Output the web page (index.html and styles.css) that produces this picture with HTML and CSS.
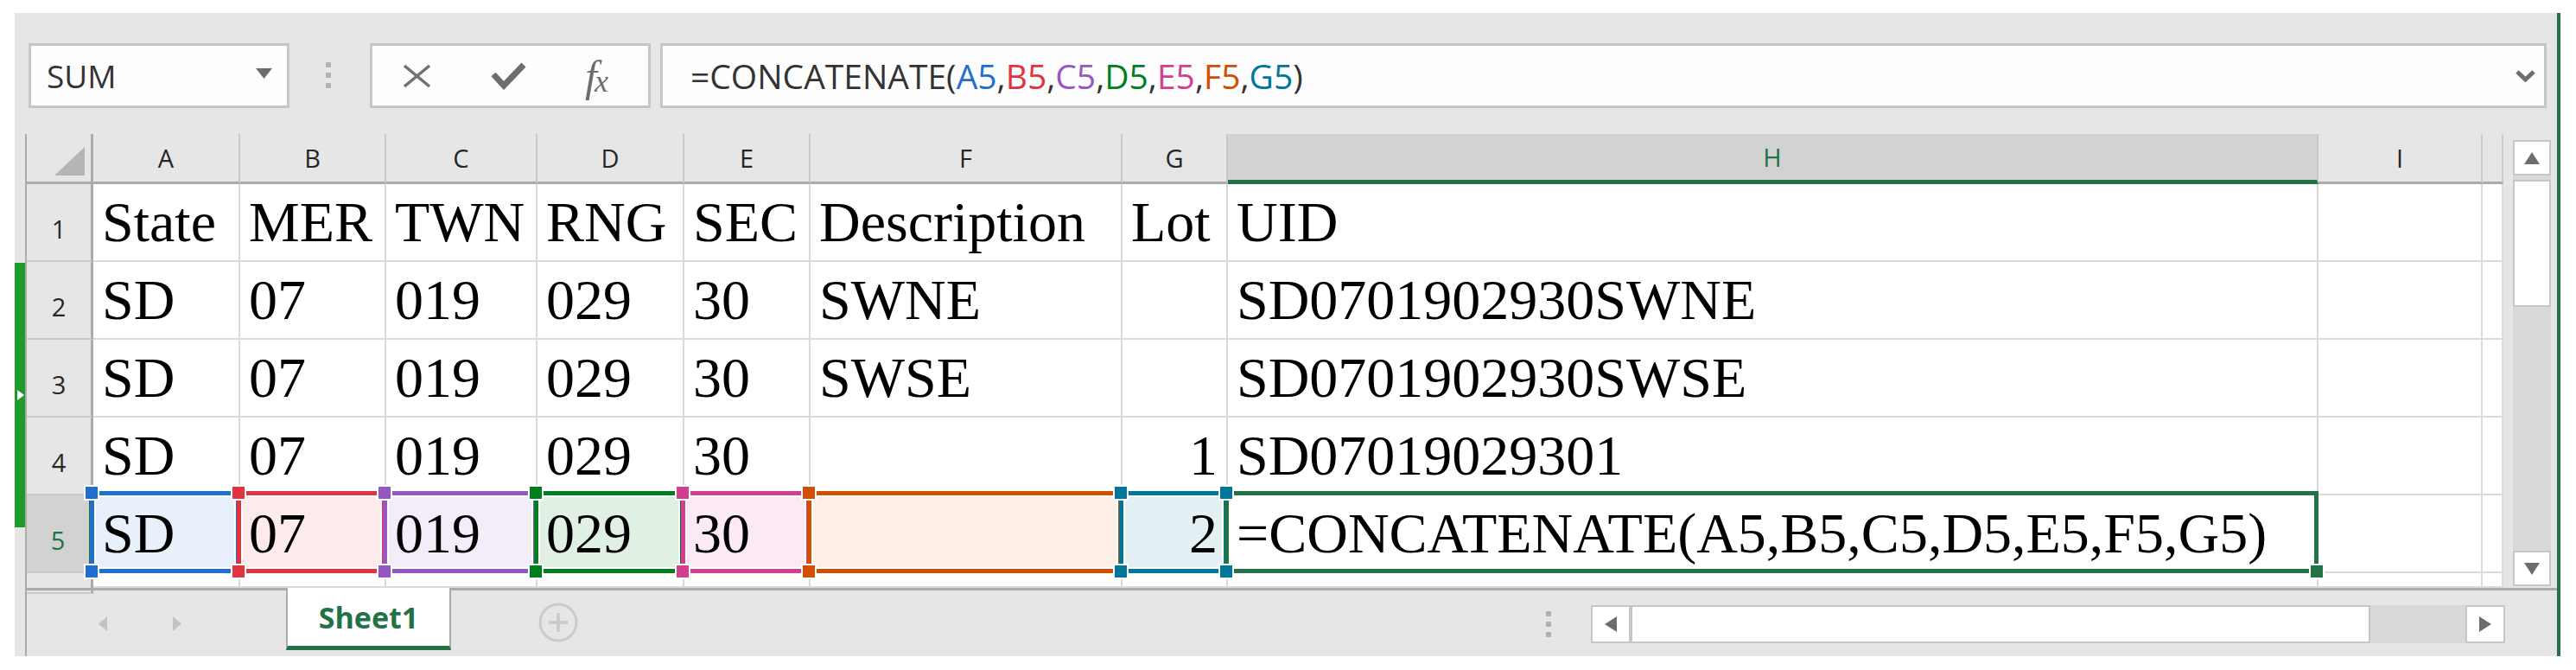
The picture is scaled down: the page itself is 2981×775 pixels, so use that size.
FILE: index.html
```html
<!DOCTYPE html>
<html>

<head>
  <meta charset="utf-8">
  <link rel="stylesheet" href="styles.css">
</head>

<body>
  <div class="window">
    <div class="formula-bar">
      <div class="name-box">
        <span>SUM</span>
        <svg width="19" height="12" viewBox="0 0 19 12"><path d="M0 0H19L9.5 12Z" fill="#6d6d6d"/></svg>
      </div>
      <svg class="grip" width="6" height="30" viewBox="0 0 6 30" fill="#b3b3b3"><rect y="0" width="6" height="6"/><rect y="12" width="6" height="6"/><rect y="24" width="6" height="6"/></svg>
      <div class="fx-buttons">
        <svg width="35" height="28" viewBox="0 0 35 28"><path d="M3 2L32 26M32 2L3 26" stroke="#707070" stroke-width="3.5" fill="none"/></svg>
        <svg width="41" height="33" viewBox="0 0 41 33"><path d="M3 15L15 28L38 4" stroke="#6d6d6d" stroke-width="7" fill="none"/></svg>
        <span class="fx"><i>f</i><i>x</i></span>
      </div>
      <div class="formula-input">
        <span class="formula">=CONCATENATE(<b class="ca">A5</b>,<b class="cb">B5</b>,<b class="cc">C5</b>,<b class="cd">D5</b>,<b class="ce">E5</b>,<b class="cf">F5</b>,<b class="cg">G5</b>)</span>
        <svg width="23" height="14" viewBox="0 0 23 14"><path d="M2 2L11.5 11L21 2" stroke="#6d6d6d" stroke-width="5" fill="none"/></svg>
      </div>
    </div>

    <div class="sheet">
      <div class="gutter">
        <div class="side-tab">
          <svg width="8" height="12" viewBox="0 0 8 12"><path d="M0 0L8 6L0 12Z" fill="#fff"/></svg>
        </div>
      </div>
      <div class="grid">
        <div class="h corner"><svg width="35" height="33" viewBox="0 0 35 33"><path d="M35 0V33H0Z" fill="#b5b5b5"/></svg></div>
        <div class="h">A</div>
        <div class="h">B</div>
        <div class="h">C</div>
        <div class="h">D</div>
        <div class="h">E</div>
        <div class="h">F</div>
        <div class="h">G</div>
        <div class="h sel">H</div>
        <div class="h">I</div>
        <div class="h"></div>

        <div class="rh">1</div>
        <div class="c">State</div>
        <div class="c">MER</div>
        <div class="c">TWN</div>
        <div class="c">RNG</div>
        <div class="c">SEC</div>
        <div class="c">Description</div>
        <div class="c">Lot</div>
        <div class="c">UID</div>
        <div class="c"></div>
        <div class="c"></div>

        <div class="rh">2</div>
        <div class="c">SD</div>
        <div class="c">07</div>
        <div class="c">019</div>
        <div class="c">029</div>
        <div class="c">30</div>
        <div class="c">SWNE</div>
        <div class="c"></div>
        <div class="c">SD0701902930SWNE</div>
        <div class="c"></div>
        <div class="c"></div>

        <div class="rh">3</div>
        <div class="c">SD</div>
        <div class="c">07</div>
        <div class="c">019</div>
        <div class="c">029</div>
        <div class="c">30</div>
        <div class="c">SWSE</div>
        <div class="c"></div>
        <div class="c">SD0701902930SWSE</div>
        <div class="c"></div>
        <div class="c"></div>

        <div class="rh">4</div>
        <div class="c">SD</div>
        <div class="c">07</div>
        <div class="c">019</div>
        <div class="c">029</div>
        <div class="c">30</div>
        <div class="c"></div>
        <div class="c num">1</div>
        <div class="c">SD07019029301</div>
        <div class="c"></div>
        <div class="c"></div>

        <div class="rh sel">5</div>
        <div class="c rng ra">SD</div>
        <div class="c rng rb">07</div>
        <div class="c rng rc">019</div>
        <div class="c rng rd">029</div>
        <div class="c rng re">30</div>
        <div class="c rng rf"></div>
        <div class="c rng rg num">2</div>
        <div class="c act">=CONCATENATE(A5,B5,C5,D5,E5,F5,G5)</div>
        <div class="c"></div>
        <div class="c"></div>

        <div class="rh"></div>
        <div class="c"></div>
        <div class="c"></div>
        <div class="c"></div>
        <div class="c"></div>
        <div class="c"></div>
        <div class="c"></div>
        <div class="c"></div>
        <div class="c"></div>
        <div class="c"></div>
        <div class="c"></div>
      </div>
      <div class="vscroll">
        <div class="sb-btn"><svg width="18" height="14" viewBox="0 0 18 14"><path d="M9 0L18 14H0Z" fill="#6d6d6d"/></svg></div>
        <div class="sb-thumb"></div>
        <div class="sb-track"></div>
        <div class="sb-btn"><svg width="18" height="14" viewBox="0 0 18 14"><path d="M0 0H18L9 14Z" fill="#6d6d6d"/></svg></div>
      </div>
    </div>

    <div class="tabbar">
      <svg class="nav" width="10" height="17" viewBox="0 0 10 17"><path d="M10 0V17L0 8.5Z" fill="#c3c3c3"/></svg>
      <svg class="nav next" width="10" height="17" viewBox="0 0 10 17"><path d="M0 0V17L10 8.5Z" fill="#c3c3c3"/></svg>
      <div class="tab">Sheet1</div>
      <svg class="add" width="46" height="46" viewBox="0 0 46 46"><circle cx="23" cy="23" r="21" stroke="#cbcbcb" stroke-width="3" fill="none"/><path d="M23 12V34M12 23H34" stroke="#cbcbcb" stroke-width="4"/></svg>
      <svg class="grip2" width="6" height="30" viewBox="0 0 6 30" fill="#b3b3b3"><rect y="0" width="6" height="6"/><rect y="12" width="6" height="6"/><rect y="24" width="6" height="6"/></svg>
      <div class="hscroll">
        <div class="sb-btn"><svg width="14" height="18" viewBox="0 0 14 18"><path d="M14 0V18L0 9Z" fill="#6d6d6d"/></svg></div>
        <div class="sb-thumb"></div>
        <div class="sb-track"></div>
        <div class="sb-btn"><svg width="14" height="18" viewBox="0 0 14 18"><path d="M0 0V18L14 9Z" fill="#6d6d6d"/></svg></div>
      </div>
    </div>
  </div>
</body>

</html>
```

FILE: styles.css
```css
html,
body {
  margin: 0;
  padding: 0;
  background: #fff;
}

body {
  font-family: "Open Sans", "Noto Sans", sans-serif;
  color: #262626;
}

.window {
  margin: 15px 0 0 17px;
  width: 2942px;
  height: 744px;
  background: #e6e6e6;
  border-right: 4px solid #217346;
  display: flex;
  flex-direction: column;
}

/* formula bar */

.formula-bar {
  box-sizing: border-box;
  height: 140px;
  padding-top: 35px;
  display: flex;
  align-items: flex-start;
}

.name-box,
.fx-buttons,
.formula-input {
  box-sizing: border-box;
  height: 75px;
  border: 3px solid #c6c6c6;
  background: #fdfdfd;
  display: flex;
  align-items: center;
}

.name-box {
  margin-left: 16px;
  width: 302px;
  padding: 0 17px 0 18px;
  justify-content: space-between;
  font-size: 37px;
  color: #333;
}

.name-box svg {
  margin-top: -6px;
}

.grip {
  margin: 22px 0 0 42px;
}

.fx-buttons {
  margin-left: 45px;
  width: 325px;
  padding-left: 34px;
  gap: 68px;
}

.fx {
  font-family: "Liberation Serif", serif;
  color: #6d6d6d;
  display: flex;
  align-items: flex-end;
  line-height: 1;
}

.fx i:first-child {
  font-size: 50px;
}

.fx i:last-child {
  font-size: 36px;
  margin-left: -3px;
  margin-bottom: 1px;
}

.formula-input {
  margin: 0 12px 0 11px;
  flex: 1;
  padding: 0 10px 0 32px;
  justify-content: space-between;
}

.formula {
  font-size: 39px;
  color: #333;
}

.formula b {
  font-weight: normal;
}

.ca { color: #1f6fcf; }
.cb { color: #e2343f; }
.cc { color: #9657c2; }
.cd { color: #007f1e; }
.ce { color: #d23f8f; }
.cf { color: #d24e00; }
.cg { color: #00769a; }

/* sheet */

.sheet {
  height: 525px;
  display: flex;
}

.gutter {
  width: 12px;
}

.side-tab {
  margin-top: 149px;
  width: 13px;
  height: 306px;
  background: #1e9b28;
  display: flex;
  align-items: center;
  justify-content: center;
}

.grid {
  display: grid;
  grid-template-columns: 77px 170px 169px 175px 170px 146px 361px 122px 1262px 190px 24px;
  grid-template-rows: 58px repeat(5, 90px) 17px;
  border-left: 2px solid #ababab;
  background: #fff;
}

.grid > div {
  box-sizing: border-box;
}

.h {
  background: #e6e6e6;
  border-right: 2px solid #c9c9c9;
  border-bottom: 3px solid #ababab;
  display: flex;
  align-items: center;
  justify-content: center;
  font-size: 29px;
}

.h.corner {
  justify-content: flex-end;
  align-items: flex-end;
  padding: 0 7px 7px 0;
  border-right: 3px solid #ababab;
}

.h.sel {
  background: #d2d2d2;
  color: #217346;
  border-bottom: 5px solid #217346;
}

.rh {
  background: #e6e6e6;
  border-right: 3px solid #ababab;
  border-bottom: 2px solid #c9c9c9;
  display: flex;
  align-items: flex-end;
  justify-content: center;
  padding-bottom: 22px;
  font-size: 29px;
  line-height: 1;
}

.rh.sel {
  background: #d2d2d2;
  color: #217346;
  border-right: 5px solid #217346;
}

.c {
  border-right: 2px solid #dadada;
  border-bottom: 2px solid #dadada;
  padding: 0 10px;
  font-family: "Liberation Serif", serif;
  font-size: 66px;
  line-height: 88px;
  color: #000;
  white-space: nowrap;
}

.c.num {
  text-align: right;
}

/* formula reference ranges */

.rng,
.act {
  position: relative;
  background: var(--fill);
}

.rng::before,
.act::before {
  content: '';
  position: absolute;
  z-index: 1;
  top: -5px;
  left: -4px;
  right: -2px;
  bottom: -2px;
  border: 5px solid var(--c);
  box-shadow: inset 0 0 0 2px #fff;
}

.rng::after {
  content: '';
  position: absolute;
  z-index: 2;
  top: -12px;
  left: -11px;
  right: -9px;
  bottom: -9px;
  background:
    linear-gradient(var(--c), var(--c)) left 2px top 2px / 14px 14px no-repeat,
    linear-gradient(var(--c), var(--c)) right 2px top 2px / 14px 14px no-repeat,
    linear-gradient(var(--c), var(--c)) left 2px bottom 2px / 14px 14px no-repeat,
    linear-gradient(var(--c), var(--c)) right 2px bottom 2px / 14px 14px no-repeat,
    linear-gradient(#fff, #fff) left top / 18px 18px no-repeat,
    linear-gradient(#fff, #fff) right top / 18px 18px no-repeat,
    linear-gradient(#fff, #fff) left bottom / 18px 18px no-repeat,
    linear-gradient(#fff, #fff) right bottom / 18px 18px no-repeat;
}

.act {
  --c: #217346;
  --fill: #fff;
}

.act::before {
  box-shadow: none;
}

.act::after {
  content: '';
  position: absolute;
  z-index: 2;
  right: -9px;
  bottom: -9px;
  width: 14px;
  height: 14px;
  background: #217346;
  border: 2px solid #fff;
}

.ra { --c: #1f6fcf; --fill: #e8f0fb; }
.rb { --c: #e2343f; --fill: #fdebec; }
.rc { --c: #9657c2; --fill: #f3ecf9; }
.rd { --c: #007f1e; --fill: #e0f1e4; }
.re { --c: #d23f8f; --fill: #fbeaf3; }
.rf { --c: #d24e00; --fill: #fdefe6; }
.rg { --c: #00769a; --fill: #e5f0f4; }

/* scroll bars */

.vscroll {
  margin: 7px 0 2px 11px;
  width: 44px;
  display: flex;
  flex-direction: column;
  background: #d9d9d9;
}

.sb-btn,
.sb-thumb {
  box-sizing: border-box;
  background: #fff;
  border: 2px solid #c6c6c6;
  display: flex;
  align-items: center;
  justify-content: center;
}

.vscroll .sb-btn {
  height: 41px;
}

.vscroll .sb-thumb {
  margin-top: 5px;
  height: 147px;
}

.sb-track {
  flex: 1;
}

/* sheet tabs */

.tabbar {
  flex: 1;
  margin-left: 12px;
  border-left: 2px solid #ababab;
  border-top: 3px solid #ababab;
  display: flex;
  align-items: flex-start;
}

.nav {
  margin: 30px 0 0 83px;
}

.nav.next {
  margin-left: 76px;
}

.tab {
  box-sizing: border-box;
  margin: -3px 0 0 121px;
  width: 191px;
  height: 72px;
  background: #fff;
  border-left: 2px solid #ababab;
  border-right: 2px solid #ababab;
  border-bottom: 5px solid #217346;
  display: flex;
  align-items: center;
  justify-content: center;
  font-size: 34px;
  font-weight: bold;
  color: #217346;
}

.add {
  margin: 14px 0 0 101px;
}

.grip2 {
  margin: 24px 0 0 1120px;
}

.hscroll {
  margin: 17px 0 0 46px;
  width: 1058px;
  height: 44px;
  display: flex;
  background: #d9d9d9;
}

.hscroll .sb-btn {
  width: 46px;
}

.hscroll .sb-thumb {
  width: 856px;
}
```
